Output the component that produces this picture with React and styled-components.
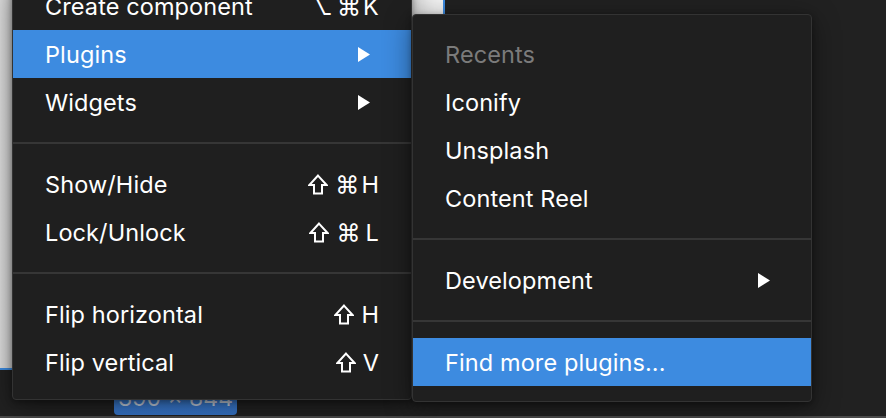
import React from "react";
import styled, { createGlobalStyle } from "styled-components";

const Global = createGlobalStyle`
  html, body { margin: 0; padding: 0; background: #222222; }
  body { font-family: Inter, "Noto Sans", "DejaVu Sans", sans-serif; -webkit-font-smoothing: antialiased; }
`;

const Stage = styled.div`
  position: relative;
  width: 886px;
  height: 418px;
  overflow: hidden;
  background: #212121;
`;

const BottomEdge = styled.div`
  position: absolute;
  left: 0;
  right: 0;
  bottom: 0;
  height: 2px;
  background: #4a4a4a;
`;

const Frame = styled.div`
  position: absolute;
  left: -400px;
  top: -500px;
  width: 843px;
  height: 868px;
  background: linear-gradient(90deg, #e4e4e4 395px, #d2d2d2 412px, #f4f4f4 813px);
  border-right: 2px solid #3d8be0;
  border-bottom: 2px solid #3d8be0;
`;

const SizeBadge = styled.div`
  position: absolute;
  left: 114px;
  top: 381px;
  width: 123px;
  height: 34px;
  border-radius: 4px;
  background: linear-gradient(#3f86e0, #3572c4);
  color: #c9d3e2;
  font-size: 23px;
  line-height: 34px;
  text-align: center;
`;

const Menu = styled.div`
  position: absolute;
  left: ${(p) => p.$left}px;
  top: ${(p) => p.$top}px;
  width: 400px;
  box-sizing: border-box;
  background: #1f1f1f;
  border: 1px solid #333333;
  border-radius: 4px;
  padding: ${(p) => p.$padTop}px 0 ${(p) => p.$padBottom}px;
  box-shadow: 0 6px 28px rgba(0, 0, 0, 0.45), 0 2px 6px rgba(0, 0, 0, 0.35);
  display: flex;
  flex-direction: column;
`;

const Item = styled.div`
  height: 48px;
  display: flex;
  align-items: center;
  justify-content: space-between;
  padding: 0 32px 0 32px;
  font-size: 23.5px;
  letter-spacing: 0.1px;
  color: ${(p) => (p.$muted ? "#7b7b7b" : "#ffffff")};
  background: ${(p) => (p.$active ? "#3d8be0" : "transparent")};
  white-space: nowrap;
`;

const Separator = styled.div`
  height: 2px;
  margin: 16px 0;
  background: #363636;
`;

const Shortcut = styled.span`
  display: flex;
  align-items: center;
  font-size: 23.5px;
`;

const KeyGlyph = styled.span`
  font-family: Inter, "DejaVu Sans", sans-serif;
  font-size: 24px;
  margin-right: ${(p) => p.$gap ?? 2}px;
`;

const ShiftIcon = styled.svg`
  width: 20px;
  height: 21px;
  margin-right: 7px;
`;

const Shift = () => (
  <ShiftIcon viewBox="0 0 20 21">
    <path
      d="M10 1.6 L18.6 11 L14 11 L14 19.4 L6 19.4 L6 11 L1.4 11 Z"
      fill="none"
      stroke="#ffffff"
      strokeWidth="2"
      strokeLinejoin="miter"
    />
  </ShiftIcon>
);

const Arrow = styled.svg`
  width: 12px;
  height: 15px;
  margin-right: 9px;
`;

const SubArrow = () => (
  <Arrow viewBox="0 0 12 15">
    <path d="M0 0 L12 7.5 L0 15 Z" fill="#ffffff" />
  </Arrow>
);

const MainMenu = () => (
  <Menu $left={12} $top={-19} $padTop={0} $padBottom={13}>
    <Item>
      <span>Create component</span>
      <Shortcut>
        <KeyGlyph $gap={4}>⌥</KeyGlyph>
        <KeyGlyph>⌘</KeyGlyph>K
      </Shortcut>
    </Item>
    <Item $active>
      <span>Plugins</span>
      <SubArrow />
    </Item>
    <Item>
      <span>Widgets</span>
      <SubArrow />
    </Item>
    <Separator />
    <Item>
      <span>Show/Hide</span>
      <Shortcut>
        <Shift />
        <KeyGlyph>⌘</KeyGlyph>H
      </Shortcut>
    </Item>
    <Item>
      <span>Lock/Unlock</span>
      <Shortcut>
        <Shift />
        <KeyGlyph $gap={5}>⌘</KeyGlyph>L
      </Shortcut>
    </Item>
    <Separator />
    <Item>
      <span>Flip horizontal</span>
      <Shortcut>
        <Shift />H
      </Shortcut>
    </Item>
    <Item>
      <span>Flip vertical</span>
      <Shortcut>
        <Shift />V
      </Shortcut>
    </Item>
  </Menu>
);

const PluginsMenu = () => (
  <Menu $left={412} $top={14} $padTop={15} $padBottom={15}>
    <Item $muted>
      <span>Recents</span>
    </Item>
    <Item>
      <span>Iconify</span>
    </Item>
    <Item>
      <span>Unsplash</span>
    </Item>
    <Item>
      <span>Content Reel</span>
    </Item>
    <Separator />
    <Item>
      <span>Development</span>
      <SubArrow />
    </Item>
    <Separator />
    <Item $active>
      <span>Find more plugins...</span>
    </Item>
  </Menu>
);

export default function App() {
  return (
    <>
      <Global />
      <Stage>
        <Frame />
        <SizeBadge>390 × 844</SizeBadge>
        <BottomEdge />
        <MainMenu />
        <PluginsMenu />
      </Stage>
    </>
  );
}
